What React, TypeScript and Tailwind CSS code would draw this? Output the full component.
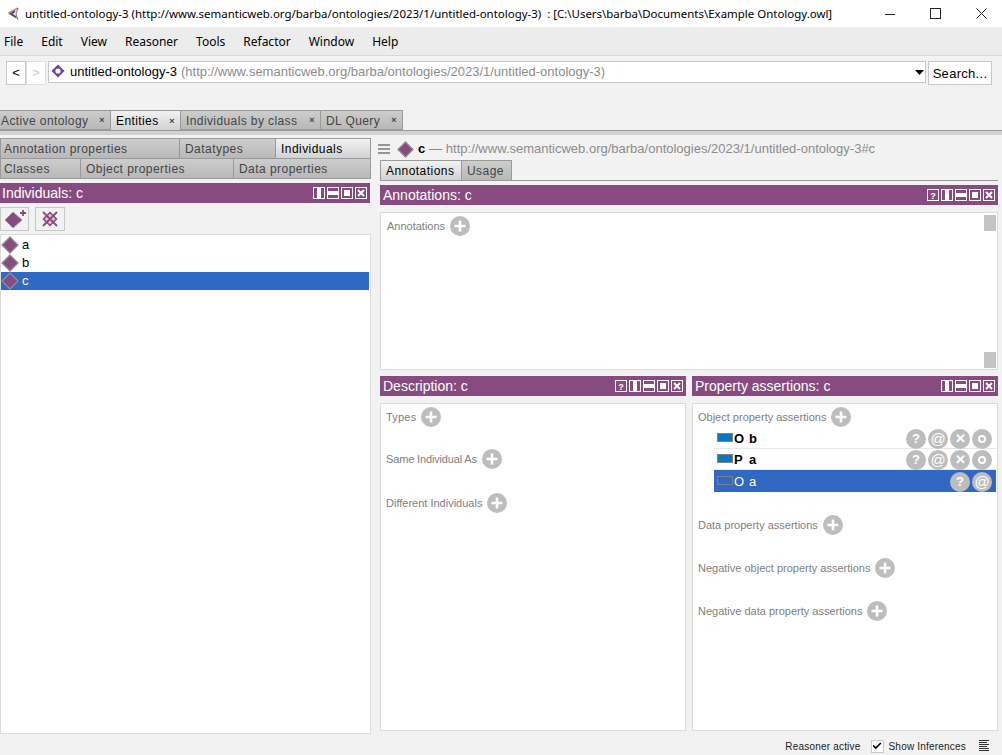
import React from 'react';
import { Check } from 'lucide-react';

const sans = "font-['Liberation_Sans',Arial,sans-serif]";

const Diamond = ({ size = 18 }: { size?: number }) => (
  <svg width={size} height={size} viewBox="0 0 18 18" className="shrink-0">
    <polygon points="9,1 17,9 9,17 1,9" fill="#884b7f" stroke="#8f8f8f" strokeWidth="1.3" />
  </svg>
);

const Plus = ({ className = '' }: { className?: string }) => (
  <svg width="20" height="20" viewBox="0 0 20 20" className={`shrink-0 ${className}`}>
    <circle cx="10" cy="10" r="10" fill="#bdbdbd" />
    <path d="M10 4.5v11M4.5 10h11" stroke="#fff" strokeWidth="2.6" />
  </svg>
);

const Round = ({ children }: { children: React.ReactNode }) => (
  <div className="w-5 h-5 rounded-full bg-[#bdbdbd] flex items-center justify-center text-white text-[13px] font-bold leading-none shrink-0">
    {children}
  </div>
);

const ViewIcon = ({ kind }: { kind: string }) => (
  <svg width="12" height="12" viewBox="0 0 12 12" className="shrink-0">
    <rect x="0.5" y="0.5" width="11" height="11" fill="none" stroke="#fff" />
    {kind === 'help' && <text x="6" y="9.5" textAnchor="middle" fontSize="9" fontWeight="bold" fill="#fff" fontFamily="Liberation Sans">?</text>}
    {kind === 'split-v' && <rect x="4" y="1" width="4" height="10" fill="#fff" />}
    {kind === 'split-h' && <rect x="1" y="4" width="10" height="4" fill="#fff" />}
    {kind === 'max' && <rect x="3" y="3" width="6" height="6" fill="#fff" />}
    {kind === 'close' && <path d="M3 3l6 6M9 3l-6 6" stroke="#fff" strokeWidth="2" />}
  </svg>
);

const PanelHeader = ({ title, icons, titleClass = '' }: { title: string; icons: string[]; titleClass?: string }) => (
  <div className="h-5 bg-[#884b7f] flex items-center justify-between pl-[3px] pr-[3px] text-white text-[14px] leading-none shrink-0">
    <span className={titleClass}>{title}</span>
    <div className="flex gap-[2px]">
      {icons.map(k => <ViewIcon key={k} kind={k} />)}
    </div>
  </div>
);

const topTabs = [
  { label: 'Active ontology', w: 'w-[111px] pl-[1px]' },
  { label: 'Entities', w: 'w-[70px] pl-[5px]', active: true },
  { label: 'Individuals by class', w: 'w-[140px] pl-[5px]' },
  { label: 'DL Query', w: 'w-[82px] pl-[5px]' },
];

const Section = ({ label, className = '', labelClass = '' }: { label: string; className?: string; labelClass?: string }) => (
  <div className={`flex items-center gap-[5px] text-[11px] text-[#808080] h-5 ${className}`}>
    <span className={labelClass}>{label}</span>
    <Plus />
  </div>
);

const AssertionRow = ({ prop, val, selected, line }: { prop: string; val: string; selected?: boolean; line?: boolean }) => (
  <div className={`flex items-center ml-[21px] mr-[1px] pr-[4px] pt-[1px] ${selected ? 'h-[22px] bg-[#3068c4] text-white' : 'h-[21px] text-black font-bold'} ${line ? 'border-b border-[#e8e8e8]' : ''}`}>
    <div className={`w-[16px] h-[9px] ml-[3px] mb-[2px] border border-[#808080] ${selected ? 'bg-[#3068c4]' : 'bg-[#0a78bd]'}`} />
    <span className="text-[13px] ml-[1px] w-[15px]">{prop}</span>
    <span className="text-[13px]">{val}</span>
    <div className="ml-auto flex gap-[2px]">
      <Round>?</Round>
      <Round><span className="font-normal text-[15px]">@</span></Round>
      {!selected && <Round>✕</Round>}
      {!selected && <Round><span className="w-[8px] h-[8px] rounded-full border-2 border-white" /></Round>}
    </div>
  </div>
);

export default function App() {
  return (
    <div className={`w-[1002px] h-[755px] overflow-hidden flex flex-col bg-[#f2f2f2] ${sans}`}>
      {/* window title */}
      <div className="h-[27px] bg-white flex items-center shrink-0 font-['Noto_Sans',sans-serif] text-[11.46px] text-black">
        <svg width="16" height="16" viewBox="0 0 16 16" className="ml-[5px] mr-[4px] shrink-0">
          <path d="M13 2L4 7l8 5" fill="none" stroke="#b9905a" strokeWidth="1.6" />
          <path d="M10 5L6 8l5 3" fill="none" stroke="#6a3f93" strokeWidth="2" />
          <path d="M13 2l-2 6 2 6" fill="none" stroke="#8a6aa8" strokeWidth="1" />
        </svg>
        <span className="whitespace-pre">untitled-ontology-3 (http://www.semanticweb.org/barba/ontologies/2023/1/untitled-ontology-3)  : [C:\Users\barba\Documents\Example Ontology.owl]</span>
        <div className="ml-auto flex items-center shrink-0 pr-[12px] gap-[30px]">
          <svg width="16" height="16" viewBox="0 0 16 16"><path d="M3 8.5h10" stroke="#222" /></svg>
          <svg width="16" height="16" viewBox="0 0 16 16"><rect x="2.5" y="2.5" width="10" height="10" fill="none" stroke="#222" /></svg>
          <svg width="16" height="16" viewBox="0 0 16 16"><path d="M2.5 2.5l10 10M12.5 2.5l-10 10" stroke="#222" /></svg>
        </div>
      </div>

      {/* menu */}
      <div className="h-[29px] bg-[#ececec] border-b border-[#d9d9d9] flex items-center pl-1 pt-[2px] gap-[18px] text-[12px] text-black font-['Noto_Sans',sans-serif] shrink-0">
        {['File', 'Edit', 'View', 'Reasoner', 'Tools', 'Refactor', 'Window', 'Help'].map(m => <span key={m}>{m}</span>)}
      </div>

      {/* ontology bar */}
      <div className="h-[54px] flex items-start pt-[5px] pl-[6px] shrink-0">
        <div className="w-[20px] h-[24px] bg-white border border-[#c8c8c8] flex items-center justify-center text-[13px]">&lt;</div>
        <div className="w-[20px] h-[24px] bg-white border border-[#e0e0e0] flex items-center justify-center text-[13px] text-[#c8c8c8]">&gt;</div>
        <div className="w-[878px] h-[22px] ml-[2px] bg-white border border-[#c8c8c8] flex items-center pl-[2px] text-[13px]">
          <svg width="14" height="14" viewBox="0 0 14 14" className="mr-[5px] mb-[3px] shrink-0">
            <polygon points="7,0.5 13.5,7 7,13.5 0.5,7" fill="#6f3fa0" />
            <circle cx="7" cy="7" r="2.6" fill="#fff" />
          </svg>
          <span className="text-black">untitled-ontology-3</span>
          <span className="text-[#8c8c8c] ml-[4px]">(http://www.semanticweb.org/barba/ontologies/2023/1/untitled-ontology-3)</span>
          <svg width="9" height="5" viewBox="0 0 9 5" className="ml-auto mr-[1px] shrink-0"><polygon points="0,0 9,0 4.5,5" fill="#000" /></svg>
        </div>
        <div className="w-[64px] h-[24px] ml-[2px] pt-[1px] bg-white border border-[#c8c8c8] flex items-center justify-center text-[13px] tracking-[0.3px]">Search...</div>
      </div>

      {/* workspace tabs */}
      <div className="h-5 flex shrink-0">
        {topTabs.map(t => (
          <div key={t.label} className={`${t.w} h-5 flex items-center justify-between pt-[1px] pr-[5px] text-[12px] tracking-[0.4px] border-r border-t border-[#9a9a9a] ${t.active ? 'bg-gradient-to-b from-[#f2f2f2] to-[#d2d2d2] text-black' : 'bg-gradient-to-b from-[#cdcdcd] to-[#b8b8b8] text-[#444] border-b'}`}>
            <span>{t.label}</span>
            <span className="text-[9px] font-bold leading-none text-[#444]">×</span>
          </div>
        ))}
      </div>
      <div className="h-[5px] bg-[#d2d2d2] border-t border-[#9a9a9a] shrink-0" />

      {/* main */}
      <div className="flex-1 min-h-0 flex pt-[3px]">
        {/* left column */}
        <div className="w-[371px] shrink-0 flex flex-col">
          <div className="border border-[#9a9a9a] text-[12px] tracking-[0.45px] text-[#444] shrink-0">
            <div className="flex h-[20px] border-b border-[#9a9a9a]">
              <div className="w-[179px] pl-[3px] flex items-center border-r border-[#9a9a9a] bg-gradient-to-b from-[#cdcdcd] to-[#b8b8b8]">Annotation properties</div>
              <div className="w-[96px] pl-[5px] flex items-center border-r border-[#9a9a9a] bg-gradient-to-b from-[#cdcdcd] to-[#b8b8b8]">Datatypes</div>
              <div className="flex-1 pl-[5px] flex items-center text-black bg-gradient-to-b from-[#f2f2f2] to-[#d2d2d2]">Individuals</div>
            </div>
            <div className="flex h-[19px]">
              <div className="w-[80px] pl-[3px] flex items-center border-r border-[#9a9a9a] bg-gradient-to-b from-[#cdcdcd] to-[#b8b8b8]">Classes</div>
              <div className="w-[153px] pl-[5px] flex items-center border-r border-[#9a9a9a] bg-gradient-to-b from-[#cdcdcd] to-[#b8b8b8]">Object properties</div>
              <div className="flex-1 pl-[5px] flex items-center bg-gradient-to-b from-[#cdcdcd] to-[#b8b8b8]">Data properties</div>
            </div>
          </div>
          <div className="mt-[4px] w-[370px]">
            <PanelHeader title="Individuals: c" titleClass="-ml-[1px]" icons={['split-v', 'split-h', 'max', 'close']} />
          </div>
          <div className="flex gap-[6px] mt-[4px] shrink-0">
            <div className="w-[29px] h-[24px] border border-[#c8c8c8] flex items-center justify-center">
              <svg width="24" height="20" viewBox="0 0 24 20">
                <polygon points="10,3 19,11 10,19 2,11" fill="#884b7f" stroke="#999" />
                <path d="M20 1v6M17 4h6" stroke="#884b7f" strokeWidth="1.8" />
              </svg>
            </div>
            <div className="w-[30px] h-[24px] border border-[#c8c8c8] flex items-center justify-center">
              <svg width="18" height="18" viewBox="0 0 18 18">
                <polygon points="9,2.5 15.5,9 9,15.5 2.5,9" fill="#d9c3d5" stroke="#884b7f" strokeWidth="1.6" strokeLinejoin="round" />
                <path d="M2 2l14 14M16 2L2 16" stroke="#884b7f" strokeWidth="1.8" />
              </svg>
            </div>
          </div>
          <div className="flex-1 mt-[3px] pt-[1px] bg-white border border-[#dcdcdc] text-[13px]">
            {['a', 'b', 'c'].map(n => (
              <div key={n} className={`h-[18px] flex items-center mr-[1px] ${n === 'c' ? 'bg-[#3068c4] text-white' : 'text-black'}`}>
                <Diamond />
                <span className="ml-[3px]">{n}</span>
              </div>
            ))}
          </div>
        </div>

        {/* right column */}
        <div className="flex-1 min-w-0 flex flex-col pl-[9px] pr-[4px] pb-[3px]">
          <div className="h-[22px] flex items-center text-[13px] -ml-[2px] shrink-0">
            <svg width="12" height="10" viewBox="0 0 12 10" className="mr-[7px] shrink-0"><path d="M0 1h12M0 5h12M0 9h12" stroke="#777" strokeWidth="1.6" /></svg>
            <Diamond size={17} />
            <span className="ml-[4px] font-bold text-black">c</span>
            <span className="text-[#8c8c8c] ml-[4px]">— http://www.semanticweb.org/barba/ontologies/2023/1/untitled-ontology-3#c</span>
          </div>
          <div className="flex h-[21px] border-b border-[#9a9a9a] text-[12px] tracking-[0.45px] shrink-0">
            <div className="w-[82px] flex items-center pl-[5px] border border-b-0 border-[#9a9a9a] text-black bg-gradient-to-b from-[#f2f2f2] to-[#d2d2d2]">Annotations</div>
            <div className="w-[50px] flex items-center pl-[5px] border-t border-r border-[#9a9a9a] text-[#444] bg-gradient-to-b from-[#cdcdcd] to-[#b8b8b8]">Usage</div>
          </div>
          <div className="mt-[4px]">
            <PanelHeader title="Annotations: c" icons={['help', 'split-v', 'split-h', 'max', 'close']} />
          </div>
          <div className="h-[158px] mt-[7px] bg-white border border-[#dcdcdc] relative pl-[6px] pt-[3px] shrink-0">
            <Section label="Annotations" />
            <div className="absolute right-[1px] top-[2px] w-3 h-4 bg-[#c4c4c4]" />
            <div className="absolute right-[1px] bottom-[1px] w-3 h-4 bg-[#c4c4c4]" />
          </div>
          <div className="flex-1 min-h-0 mt-[6px] flex gap-[6px]">
            <div className="flex-1 min-w-0 flex flex-col">
              <PanelHeader title="Description: c" icons={['help', 'split-v', 'split-h', 'max', 'close']} />
              <div className="flex-1 mt-[7px] bg-white border border-[#dcdcdc] pl-[5px] pt-[3px]">
                <Section label="Types" labelClass="tracking-[0.2px]" />
                <Section label="Same Individual As" labelClass="tracking-[-0.15px]" className="mt-[22px]" />
                <Section label="Different Individuals" className="mt-[24px]" />
              </div>
            </div>
            <div className="flex-1 min-w-0 flex flex-col">
              <PanelHeader title="Property assertions: c" icons={['split-v', 'split-h', 'max', 'close']} />
              <div className="flex-1 mt-[7px] bg-white border border-[#dcdcdc] pl-[5px] pt-[3px]">
                <Section label="Object property assertions" />
                <div className="-ml-[5px] mt-[1px]">
                  <AssertionRow prop="O" val="b" line />
                  <AssertionRow prop="P" val="a" line />
                  <AssertionRow prop="O" val="a" selected />
                </div>
                <Section label="Data property assertions" className="mt-[23px]" />
                <Section label="Negative object property assertions" className="mt-[23px]" />
                <Section label="Negative data property assertions" className="mt-[23px]" />
              </div>
            </div>
          </div>
        </div>
      </div>

      {/* status bar */}
      <div className="h-[21px] flex items-center justify-end pt-[3px] text-[10px] tracking-[0.2px] text-[#222] pr-[12px] shrink-0">
        <span>Reasoner active</span>
        <div className="w-[13px] h-[13px] ml-[10px] bg-white border border-[#c8c8c8] flex items-center justify-center">
          <Check size={10} strokeWidth={4} color="#000" />
        </div>
        <span className="ml-[5px]">Show Inferences</span>
        <svg width="11" height="12" viewBox="0 0 11 12" className="ml-[13px]"><path d="M0 .5h10M0 2.5h8M0 4.5h10M0 6.5h8M0 8.5h10M0 10.5h10" stroke="#333" /></svg>
      </div>
    </div>
  );
}
